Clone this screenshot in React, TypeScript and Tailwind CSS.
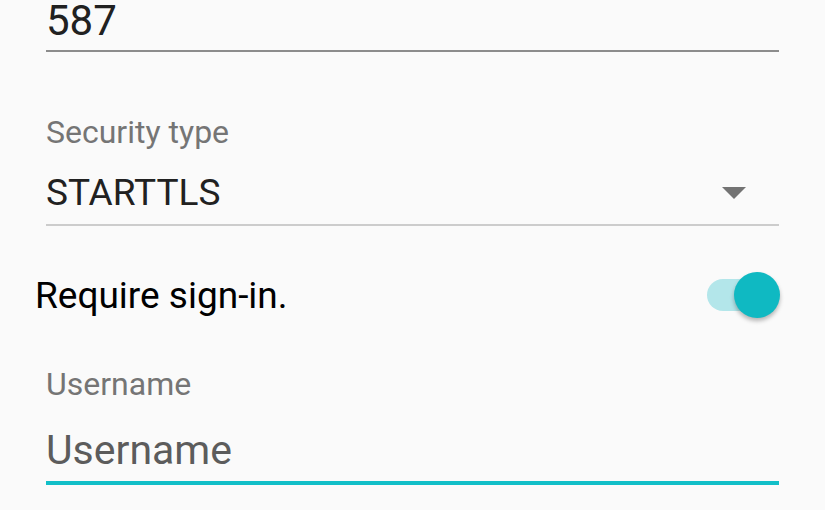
const font = { fontFamily: "Roboto, 'Noto Sans', sans-serif" };

function Switch({ on }: { on: boolean }) {
  return (
    <div className="relative h-[46px] w-[73px] shrink-0">
      <div className="absolute left-0 top-[7px] h-[32px] w-[56px] rounded-full bg-[#b3e6ea]" />
      <div
        className={
          'absolute top-0 h-[46px] w-[46px] rounded-full bg-[#0fb9c2] shadow-[0_3px_4px_rgba(0,0,0,0.28)] ' +
          (on ? 'right-0' : 'left-0')
        }
      />
    </div>
  );
}

export default function App() {
  return (
    <div className="h-[510px] w-[825px] overflow-hidden bg-[#fafafa]" style={font}>
      {/* port field */}
      <div className="ml-[46px] w-[733px]">
        <div className="text-[42px] leading-[42px] text-[#212121]">587</div>
        <div className="mt-[8px] h-[2px] bg-[#8c8c8c]" />
      </div>

      {/* security type spinner */}
      <div className="ml-[46px] w-[733px]">
        <div className="mt-[64px] text-[32px] leading-[32px] text-[#757575]">Security type</div>
        <div className="mt-[26px] flex h-[37px] items-center justify-between">
          <span className="text-[37px] leading-[37px] text-[#212121]">STARTTLS</span>
          <svg width="24" height="12" viewBox="0 0 24 12" className="mr-[33px] mt-[1px]">
            <polygon points="0,0 24,0 12,12" fill="#737373" />
          </svg>
        </div>
        <div className="mt-[13px] h-[2px] bg-[#cccccc]" />
      </div>

      {/* require sign-in */}
      <div className="ml-[35px] mt-[46px] flex w-[745px] items-center justify-between">
        <span className="text-[37px] leading-[37px] text-black">Require sign-in.</span>
        <Switch on />
      </div>

      {/* username */}
      <div className="ml-[46px] w-[733px]">
        <div className="mt-[50px] text-[32px] leading-[32px] text-[#757575]">Username</div>
        <div className="mt-[30px] text-[41px] leading-[41px] text-[#5c5c5c]">Username</div>
        <div className="mt-[10px] h-[4px] bg-[#12bfc8]" />
      </div>
    </div>
  );
}
